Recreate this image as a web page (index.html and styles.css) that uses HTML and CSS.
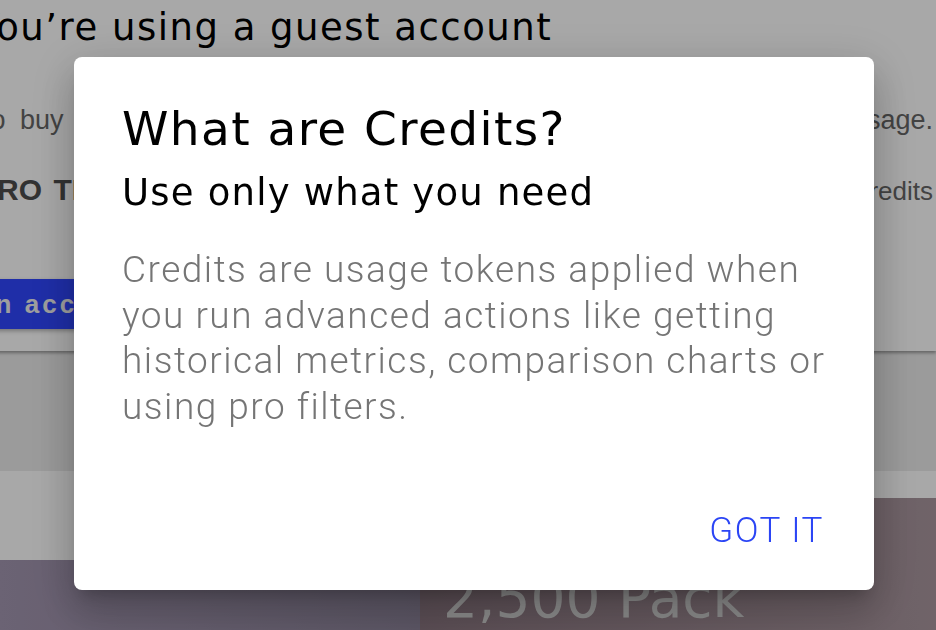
FILE: index.html
```html
<!DOCTYPE html>
<html lang="en">
<head>
  <meta charset="UTF-8">
  <meta name="viewport" content="width=device-width, initial-scale=1.0">
  <title>Credits</title>
  <link rel="stylesheet" href="styles.css">
</head>
<body>
  <div class="page">
    <div class="guest">
      <h1>You’re using a guest account</h1>
      <p class="guest-note">To buy credits, sign in or create an account so we can track your usage.</p>
      <p class="guest-tip"><strong>PRO TIP:</strong> Buy bigger packs to save more and get the most out of your credits</p>
      <button class="btn-account">Create an account</button>
    </div>

    <div class="packs-head">
      <h2>Credit packs</h2>
    </div>

    <div class="packs">
      <div class="pack pack-small"></div>
      <div class="pack pack-large">
        <h3>2,500 Pack</h3>
      </div>
    </div>
  </div>

  <div class="overlay">
    <div class="dialog">
      <h2 class="dialog-title">What are Credits?</h2>
      <h3 class="dialog-sub">Use only what you need</h3>
      <p class="dialog-text">Credits are usage tokens applied when you run advanced actions like getting historical metrics, comparison charts or using pro filters.</p>
      <div class="dialog-actions">
        <button class="btn-text">GOT IT</button>
      </div>
    </div>
  </div>
</body>
</html>
```

FILE: styles.css
```css
body {
  margin: 0;
  background-color: #fff;
  font-family: "Liberation Sans", Arial, sans-serif;
  overflow: hidden;
}

.page {
  width: 936px;
  height: 630px;
  overflow: hidden;
}

/* guest account card */
.guest {
  margin-left: -23px;
  height: 351px;
  box-sizing: border-box;
  padding: 6px 3px 0 0;
  background-color: #fff;
  box-shadow: 0 2px 3px rgba(0, 0, 0, 0.35);
  position: relative;
}

.guest h1 {
  margin: 0;
  font-family: "DejaVu Sans", sans-serif;
  font-weight: 400;
  font-size: 37px;
  line-height: 44px;
  letter-spacing: 1.5px;
  color: #000;
}

.guest-note,
.guest-tip {
  margin: 0;
  white-space: nowrap;
  text-align: justify;
  text-align-last: justify;
  color: #666;
  font-size: 27px;
}

.guest-note {
  margin-top: 54px;
  line-height: 32px;
}

.guest-tip {
  margin-top: 34px;
  line-height: 40px;
  font-size: 26px;
}

.guest-tip strong {
  font-size: 30px;
  color: #4d4d4d;
}

.btn-account {
  display: block;
  margin: 68px 0 0 -132px;
  height: 50px;
  padding: 0 24px;
  border: none;
  border-radius: 4px;
  background-color: #2f46ff;
  color: #f0f0f0;
  font-family: "Liberation Sans", Arial, sans-serif;
  font-weight: 700;
  font-size: 26px;
  letter-spacing: 3px;
  box-shadow: 0 2px 4px rgba(0, 0, 0, 0.3);
}

/* packs */
.packs-head {
  height: 120px;
  background-color: #ebebeb;
  display: flex;
  align-items: center;
  justify-content: center;
}

.packs-head h2 {
  margin: 0;
  font-family: "DejaVu Sans", sans-serif;
  font-weight: 400;
  font-size: 28px;
  color: #333;
}

.packs {
  display: grid;
  grid-template-columns: 420px 1fr;
  align-items: start;
  padding-top: 27px;
}

.pack {
  height: 300px;
}

.pack-small {
  margin-top: 62px;
  background: linear-gradient(90deg, #a396b0, #8c8399);
}

.pack-large {
  background: linear-gradient(90deg, #8a7680, #aa979f);
  padding: 68px 0 0 23px;
  box-sizing: border-box;
}

.pack-large h3 {
  margin: 0;
  font-family: "DejaVu Sans", sans-serif;
  font-weight: 400;
  font-size: 55px;
  line-height: 64px;
  color: #d2d2d2;
}

/* dialog */
.overlay {
  position: fixed;
  inset: 0;
  background-color: rgba(0, 0, 0, 0.34);
  display: flex;
  align-items: flex-start;
  padding: 57px 0 0 74px;
}

.dialog {
  width: 800px;
  height: 533px;
  box-sizing: border-box;
  padding: 44px 42px 40px 48px;
  background-color: #fff;
  border-radius: 8px;
  display: flex;
  flex-direction: column;
  box-shadow: 0 11px 15px -7px rgba(0, 0, 0, 0.2),
              0 24px 38px 3px rgba(0, 0, 0, 0.14),
              0 9px 46px 8px rgba(0, 0, 0, 0.12);
}

.dialog-title {
  margin: 0;
  font-family: "DejaVu Sans", sans-serif;
  font-weight: 400;
  font-size: 47px;
  line-height: 56px;
  letter-spacing: 1.4px;
  color: #000;
}

.dialog-sub {
  margin: 14px 0 0;
  font-family: "DejaVu Sans", sans-serif;
  font-weight: 400;
  font-size: 37px;
  line-height: 44px;
  letter-spacing: 1.2px;
  color: #000;
}

.dialog-text {
  margin: 32px 0 0;
  font-family: Roboto, "Liberation Sans", sans-serif;
  font-weight: 300;
  font-size: 37px;
  line-height: 45.7px;
  letter-spacing: 1.5px;
  color: #757575;
}

.dialog-actions {
  margin-top: auto;
  display: flex;
  justify-content: flex-end;
}

.btn-text {
  padding: 0 8px 0 8px;
  height: 40px;
  border: none;
  background: none;
  color: #2b45f5;
  font-family: Roboto, "Liberation Sans", sans-serif;
  font-weight: 300;
  font-size: 35px;
  letter-spacing: 1.5px;
  cursor: pointer;
}
```
